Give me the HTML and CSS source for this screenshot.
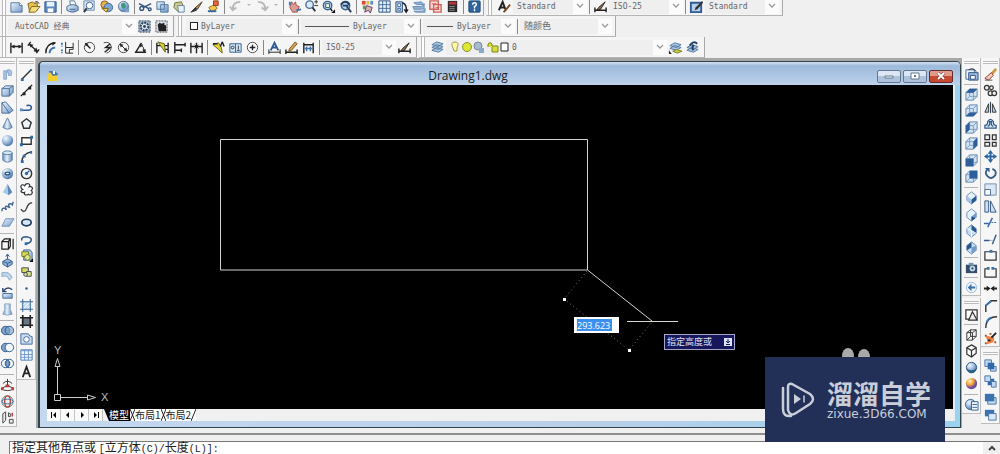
FILE: index.html
```html
<!DOCTYPE html>
<html lang="zh-CN">
<head>
<meta charset="utf-8">
<title>AutoCAD - Drawing1.dwg</title>
<link rel="stylesheet" href="styles.css">
</head>
<body>
<svg class="sprite" aria-hidden="true">
  <defs>
    <linearGradient id="gb" x1="0" y1="0" x2="1" y2="1"><stop offset="0" stop-color="#eef6fd"/><stop offset="1" stop-color="#6f98c6"/></linearGradient>
    <linearGradient id="gh" x1="0" y1="0" x2="1" y2="0"><stop offset="0" stop-color="#6d92bd"/><stop offset=".45" stop-color="#e6f1fb"/><stop offset="1" stop-color="#5d84b2"/></linearGradient>
    <radialGradient id="gs" cx=".35" cy=".3" r=".75"><stop offset="0" stop-color="#f4faff"/><stop offset=".6" stop-color="#8fb0d6"/><stop offset="1" stop-color="#46709f"/></radialGradient>
    <radialGradient id="gm" cx=".35" cy=".3" r=".8"><stop offset="0" stop-color="#fff2c0"/><stop offset=".4" stop-color="#f3a53a"/><stop offset=".7" stop-color="#7d4b9c"/><stop offset="1" stop-color="#3b50a0"/></radialGradient>
  </defs>
  <!-- standard -->
  <symbol id="new" viewBox="0 0 16 16"><path d="M2 4h9l3 3v7H2z" fill="url(#gb)" stroke="#55779e"/><path d="M11 4v3h3" fill="#fff" stroke="#55779e"/></symbol>
  <symbol id="open" viewBox="0 0 16 16"><path d="M2 5l5-2 2 2 3-1v8l-8 2z" fill="#e6c34a" stroke="#80662a"/><path d="M6 8h9l-5 6H3z" fill="#f7de7a" stroke="#80662a"/><path d="M9 4q3-3 5 1" fill="none" stroke="#333"/></symbol>
  <symbol id="save" viewBox="0 0 16 16"><path d="M2 3h12v11H2z" fill="#5b88bd" stroke="#2d5588"/><path d="M4 3h8v5H4z" fill="#e6f1fb"/><path d="M5 10h6v4H5z" fill="#fff"/></symbol>
  <symbol id="print" viewBox="0 0 16 16"><path d="M5 2h5l2 5H6z" fill="#fff" stroke="#55779e"/><path d="M2 8q6-4 12 0v4q-6 4-12 0z" fill="url(#gb)" stroke="#45648b"/><path d="M5 11h6" stroke="#45648b"/></symbol>
  <symbol id="preview" viewBox="0 0 16 16"><path d="M2 2h11v10H2z" fill="#d4e5f5" stroke="#6f8db0"/><circle cx="8" cy="7" r="3.5" fill="#fff" stroke="#45648b"/><path d="M5 10l-3 4" stroke="#333" stroke-width="2"/></symbol>
  <symbol id="publish" viewBox="0 0 16 16"><circle cx="6" cy="6" r="4" fill="#e9b24a" stroke="#8b5b22"/><circle cx="10" cy="9" r="4.5" fill="#7fa6d0" stroke="#3d6595"/><path d="M3 10l5 4 2-4z" fill="#f0cb4e" stroke="#81631b"/></symbol>
  <symbol id="globe" viewBox="0 0 16 16"><circle cx="8" cy="8" r="5.5" fill="url(#gs)" stroke="#69839f"/><path d="M5 5l4-1 2 4-3 3-2-2z" fill="#3d987a"/><path d="M10 11l4-2v5H9z" fill="#77a0cb"/></symbol>
  <symbol id="cut" viewBox="0 0 16 16"><g fill="none" stroke="#35557d" stroke-width="1.5"><path d="M1 5l10 5M14 5L6 9"/><circle cx="4" cy="10" r="2"/><circle cx="12.500" cy="11" r="1.500"/></g></symbol>
  <symbol id="copy" viewBox="0 0 16 16"><path d="M2 3h8v8H2zM6 6h8v8H6z" fill="url(#gb)" stroke="#55779e"/></symbol>
  <symbol id="paste" viewBox="0 0 16 16"><path d="M3 4l7-1 3 7-6 4-5-5z" fill="#cfc98e" stroke="#6c7442"/><path d="M6 7h7v7H7z" fill="#e8f2fb" stroke="#6885a7"/></symbol>
  <symbol id="match" viewBox="0 0 16 16"><path d="M14 3L7 9l2 2z" fill="#c79a58" stroke="#4b3320"/><path d="M7 9l-5 5 6-2z" fill="#333" stroke="#333"/></symbol>
  <symbol id="block" viewBox="0 0 16 16"><path d="M3 9l6-3 3 4-6 4z" fill="#f3c548" stroke="#966e1d"/><path d="M8 2h5v5H8z" fill="#e5673c" stroke="#923b20"/><path d="M2 13h9" stroke="#3566a1" stroke-width="2"/></symbol>
  <symbol id="undo" viewBox="0 0 16 16"><path d="M13 3Q5 3 5 11M2 8l3 4 4-3" fill="none" stroke="#b9b9b9" stroke-width="2"/></symbol>
  <symbol id="redo" viewBox="0 0 16 16"><path d="M3 3q8 0 8 8M7 9l4 3 3-4" fill="none" stroke="#b9b9b9" stroke-width="2"/></symbol>
  <symbol id="pan" viewBox="0 0 16 16"><path d="M4 6l1-3 2 3 2-3 1 4 3 1-2 6H6L3 9z" fill="#dc9c92" stroke="#a1544c"/><path d="M10 12l5-1M3 3v4" stroke="#4675ab" stroke-width="2"/></symbol>
  <symbol id="zoomrt" viewBox="0 0 16 16"><circle cx="6" cy="6" r="4" fill="#d9eafa" stroke="#4a6f9a" stroke-width="1.500"/><path d="M9 9l3 4" stroke="#333" stroke-width="2"/><path d="M11 3h4M13 1v4M11 7h4" stroke="#333"/></symbol>
  <symbol id="zoomwin" viewBox="0 0 16 16"><circle cx="7" cy="7" r="4.500" fill="#b9d5f0" stroke="#3c648f" stroke-width="1.500"/><path d="M5 5h4v4H5z" fill="#fff" stroke="#355"/><path d="M10 10l2 3" stroke="#111" stroke-width="1.500"/><path d="M15 11v4h-4z" fill="#111"/></symbol>
  <symbol id="zoomprev" viewBox="0 0 16 16"><circle cx="8" cy="7" r="4.500" fill="#b9d5f0" stroke="#3c648f" stroke-width="1.500"/><path d="M3 6q5-6 9 0M5 7h5v3M11 10l3 4" fill="none" stroke="#223d62" stroke-width="2"/></symbol>
  <symbol id="props" viewBox="0 0 16 16"><path d="M2 2h4v4H2z" fill="#d84b3d"/><path d="M7 2h3v4H7z" fill="#eab83d"/><path d="M11 2h3v4h-3z" fill="#5b8fce"/><path d="M3 7h3v4H3z" fill="#5b9d54"/><path d="M7 7l6 2-2 6-2-3-4 2z" fill="#d9b2a4" stroke="#5a3d78"/></symbol>
  <symbol id="dc" viewBox="0 0 16 16"><path d="M2 2h12v12H2z" fill="#e3effa" stroke="#2d4f78"/><path d="M6 2v12M10 2v12M2 6h12M2 10h12" stroke="#456e9e"/></symbol>
  <symbol id="palette" viewBox="0 0 16 16"><path d="M2 3h7v11H2z" fill="#b5d0eb" stroke="#2d4f78"/><path d="M4 5h3v3H4zM4 10h3v2H4z" fill="#fff" stroke="#456e9e"/><path d="M9 4q5 2 4 9M11 11l2 3 2-3" fill="none" stroke="#223" stroke-width="1.500"/></symbol>
  <symbol id="sheets" viewBox="0 0 16 16"><path d="M3 4l8-1 3 3H6zM2 8h9l3-3v5l-3 1H3zM3 13h9l3-3v4H5z" fill="#8cb1d4" stroke="#6a8eb4"/></symbol>
  <symbol id="markup" viewBox="0 0 16 16"><path d="M2 2h9v9H2zM6 6h8v8H6z" fill="#f8dedb" stroke="#cf625b" stroke-width="1.500"/><path d="M4 5h5M8 9h4M8 11h4" stroke="#cf625b"/></symbol>
  <symbol id="calc" viewBox="0 0 16 16"><path d="M3 2h10v12H3z" fill="#2b2b2b"/><path d="M4 3h8v3H4z" fill="#b63534"/><path d="M5 8h6M5 10h6M5 12h6" stroke="#ddd" stroke-dasharray="1 1"/></symbol>
  <symbol id="help" viewBox="0 0 16 16"><rect x="2" y="2" width="12" height="12" rx="1" fill="#2f659f" stroke="#1d4472"/><path d="M6 6q0-2 2-2t2 2q0 1-2 2v2M8 11v2" fill="none" stroke="#fff" stroke-width="1.500"/></symbol>
  <!-- styles -->
  <symbol id="tstyle" viewBox="0 0 16 16"><path d="M2 12L6 3l3 8M4 9h4" fill="none" stroke="#222" stroke-width="2"/><path d="M14 6l-5 6-2 2" stroke="#7a4a23" stroke-width="2"/></symbol>
  <symbol id="dstyle" viewBox="0 0 16 16"><path d="M2 9v5M14 9v5M2 12h12" stroke="#222" stroke-width="1.500"/><path d="M13 3L6 9l-2 3 4-1z" fill="#9a6b3a" stroke="#222"/></symbol>
  <symbol id="tbstyle" viewBox="0 0 16 16"><path d="M2 4h11v10H2z" fill="#b7d1ec" stroke="#2e5b92" stroke-width="2"/><path d="M14 2L7 9l-1 3 3-1 6-7z" fill="#333"/></symbol>
  <symbol id="gear" viewBox="0 0 16 16"><path d="M2 2h12v12H2z" fill="#9fb4cb" stroke="#344a63" stroke-dasharray="2 1"/><circle cx="8" cy="8" r="4" fill="#dce7f2" stroke="#2f4155" stroke-width="2" stroke-dasharray="2 1"/><circle cx="8" cy="8" r="1.500" fill="#2f4155"/></symbol>
  <symbol id="wsave" viewBox="0 0 16 16"><path d="M2 2h12v12H2z" fill="#d6dde4" stroke="#555" stroke-dasharray="2 1"/><path d="M4 6l2-2 2 1 3-1v2l2 1v6H5z" fill="#222"/></symbol>
  <!-- dimension -->
  <symbol id="dlin" viewBox="0 0 16 16"><path d="M2 3v11M14 3v11M3 7h10" stroke="#222" stroke-width="1.500"/><path d="M2 7l4-2v4zM14 7l-4-2v4z" fill="#222"/></symbol>
  <symbol id="dali" viewBox="0 0 16 16"><path d="M5 2L2 6M14 10l-3 4M4 5l8 7" stroke="#222" stroke-width="1.500"/><path d="M3 4l5 1-3 3zM13 13l-5-1 3-4z" fill="#222"/></symbol>
  <symbol id="darc" viewBox="0 0 16 16"><path d="M3 14Q3 4 13 3" fill="none" stroke="#222" stroke-width="1.500"/><path d="M7 14q0-5 6-6" fill="none" stroke="#3f75b0" stroke-width="2"/><path d="M14 3l-4-1v4z" fill="#222"/></symbol>
  <symbol id="dord" viewBox="0 0 16 16"><path d="M6 2v6h8M6 8v6h8M10 14v-4h4V3" fill="none" stroke="#222"/><path d="M2 3v4M2 10v4" stroke="#3f75b0" stroke-width="2" stroke-dasharray="2 1"/></symbol>
  <symbol id="drad" viewBox="0 0 16 16"><circle cx="8" cy="8" r="5.500" fill="#f8f8f8" stroke="#444"/><path d="M4 4l5 5" stroke="#222" stroke-width="1.500"/><path d="M3 3l4 1-3 3z" fill="#222"/></symbol>
  <symbol id="djog" viewBox="0 0 16 16"><path d="M5 3q7-2 8 4 0 6-5 7" fill="none" stroke="#444"/><path d="M12 4L7 8h5l-6 5" fill="none" stroke="#222" stroke-width="1.500"/></symbol>
  <symbol id="ddia" viewBox="0 0 16 16"><circle cx="8" cy="8" r="5.500" fill="#f8f8f8" stroke="#444"/><path d="M5 5l6 6" stroke="#222"/><path d="M4 4l4 1-3 3zM12 12l-4-1 3-3z" fill="#222"/></symbol>
  <symbol id="dang" viewBox="0 0 16 16"><path d="M2 13h12M3 13l6-10" stroke="#222" stroke-width="1.500"/><path d="M8 5q4 2 4 7" fill="none" stroke="#222"/><path d="M10 10h4l-2 4zM7 4l4 1-3 3z" fill="#222"/></symbol>
  <symbol id="dquick" viewBox="0 0 16 16"><path d="M2 3v11M14 3v11M2 6h12M9 10h5" stroke="#222" stroke-width="1.500"/><path d="M3 2l7 2 1 9-3-4z" fill="#d5ce32" stroke="#675f1c"/></symbol>
  <symbol id="dbase" viewBox="0 0 16 16"><path d="M3 2v12M14 3v4M10 9v4M3 5h11M3 11h7" stroke="#222" stroke-width="1.500"/></symbol>
  <symbol id="dcont" viewBox="0 0 16 16"><path d="M2 3v11M8 3v11M14 3v11M2 7h12" stroke="#222" stroke-width="1.500"/><path d="M6 5l2 2-2 2M10 5L8 7l2 2" fill="none" stroke="#222"/></symbol>
  <symbol id="dlead" viewBox="0 0 16 16"><path d="M2 5l6-2 3 5 1 6-4-4z" fill="#ddd134" stroke="#6b611c"/><path d="M2 4h5M12 2l2 5M12 2l-2 5" stroke="#222" stroke-width="1.500"/></symbol>
  <symbol id="dtol" viewBox="0 0 16 16"><path d="M2 4h12v9H2zM8 4v9" fill="#d7e7f6" stroke="#345f92"/><circle cx="5" cy="8" r="1.500" fill="none" stroke="#234"/><path d="M11 6v4M9.500 11h3" stroke="#234"/></symbol>
  <symbol id="dcen" viewBox="0 0 16 16"><circle cx="8" cy="8" r="5.500" fill="#fff" stroke="#444"/><path d="M8 5v6M5 8h6" stroke="#222" stroke-width="1.500"/></symbol>
  <symbol id="dedit" viewBox="0 0 16 16"><path d="M4 11l4-8 4 8M5 8h6" fill="none" stroke="#2b5b94" stroke-width="2"/><path d="M2 10v5M14 10v5M2 13h12" stroke="#222"/></symbol>
  <symbol id="dtedit" viewBox="0 0 16 16"><path d="M2 10v5M14 10v5M2 13h12" stroke="#222" stroke-width="1.500"/><path d="M12 2L6 9l-1 3 3-1 6-7z" fill="#d8a144" stroke="#75552a"/></symbol>
  <symbol id="dupd" viewBox="0 0 16 16"><path d="M3 3v11M13 3v11M3 5h10" stroke="#222" stroke-width="1.500"/><path d="M4 9h8M6 7v5M10 7v5" stroke="#3f75b0" stroke-width="1.500"/></symbol>
  <symbol id="layers" viewBox="0 0 16 16"><path d="M2 11l5-3 7 2-5 3zM2 8l5-3 7 2-5 3zM2 5l5-3 7 2-5 3z" fill="#a8c5e3" stroke="#55799f"/></symbol>
  <symbol id="laycur" viewBox="0 0 16 16"><path d="M2 9l5-3 7 2-5 3zM2 6l5-3 7 2-5 3z" fill="#a8c5e3" stroke="#55799f"/><path d="M5 12l4-2 6 2-5 2z" fill="#c7cc38" stroke="#7a8030"/><path d="M1 11v4h3z" fill="#222"/></symbol>
  <symbol id="layprev" viewBox="0 0 16 16"><path d="M2 11l5-3 7 2-5 3zM2 8l5-3 7 2-5 3z" fill="#a8c5e3" stroke="#55799f"/><path d="M5 6q4-6 8-2M9 5q-2 3 0 6" fill="none" stroke="#223d62" stroke-width="2"/></symbol>
  <symbol id="layst" viewBox="0 0 64 16"><path d="M5 9Q2 3 7 3t2 6v3H6z" fill="#fff7a6" stroke="#a29b52"/><circle cx="19" cy="8" r="4.500" fill="#dbe635" stroke="#8b9330"/><circle cx="30" cy="7" r="4" fill="#a9bccd" stroke="#73889b"/><path d="M31 9h5v5h-5z" fill="#88a9cb"/><path d="M40 8V5q2-3 4 0v2h6v6h-6V8" fill="#d6df32" stroke="#7f8628"/><path d="M53 4h7v8h-7z" fill="#fff" stroke="#222"/></symbol>
  <!-- modeling -->
  <symbol id="psolid" viewBox="0 0 16 16"><path d="M4 4h3v9H4zM8 3q6-1 4 6H9V6H8z" fill="#a8c4e2" stroke="#89a9cc"/></symbol>
  <symbol id="box" viewBox="0 0 16 16"><path d="M2 6l4-3h8v7l-4 4H2z" fill="url(#gb)" stroke="#496d98"/><path d="M2 6h8v8M10 6l4-3" fill="none" stroke="#496d98"/></symbol>
  <symbol id="wedge" viewBox="0 0 16 16"><path d="M2 3l4-1 8 9-4 3H2z" fill="url(#gb)" stroke="#496d98"/><path d="M2 3l8 11" stroke="#496d98"/></symbol>
  <symbol id="cone" viewBox="0 0 16 16"><path d="M8 2l5 10q-5 4-10 0z" fill="url(#gh)" stroke="#5d7da3"/></symbol>
  <symbol id="sphere" viewBox="0 0 16 16"><circle cx="8" cy="8" r="6" fill="url(#gs)"/></symbol>
  <symbol id="cyl" viewBox="0 0 16 16"><path d="M3 4v8q5 4 10 0V4z" fill="url(#gh)" stroke="#5d7da3"/><ellipse cx="8" cy="4" rx="5" ry="2" fill="#d8e7f5" stroke="#5d7da3"/></symbol>
  <symbol id="torus" viewBox="0 0 16 16"><circle cx="8" cy="8" r="6" fill="url(#gs)"/><ellipse cx="8" cy="8" rx="2.500" ry="1.500" fill="#e9f2fa" stroke="#2e547f" stroke-width="1.500"/></symbol>
  <symbol id="pyr" viewBox="0 0 16 16"><path d="M8 2l5 9-4 3-6-3z" fill="#a9c9e8"/><path d="M8 2l5 9-4 3z" fill="#5b88b9"/></symbol>
  <symbol id="helix" viewBox="0 0 16 16"><path d="M2 13q0-4 3-3t1 1q-1-4 2-3t2 1q-2-4 1-4t2 2l1-4" fill="none" stroke="#3f6595" stroke-width="1.500"/></symbol>
  <symbol id="psurf" viewBox="0 0 16 16"><path d="M6 4h9l-5 8H2z" fill="url(#gb)" stroke="#7192b8"/></symbol>
  <symbol id="polysolid" viewBox="0 0 16 16"><path d="M2 6h7v8H2zM2 6l3-3h6v8l-2 3M9 6l2-3M14 3v11" fill="none" stroke="#222" stroke-width="1.300"/></symbol>
  <symbol id="presspull" viewBox="0 0 16 16"><path d="M8 2v5M3 9l5-3 5 3v3l-5 3-5-3z" fill="#8baed3" stroke="#395f8c"/><path d="M3 9l5 2 5-2M8 11v4M6 4l2-3 2 3" fill="none" stroke="#395f8c"/></symbol>
  <symbol id="sweep" viewBox="0 0 16 16"><path d="M2 4q8-2 11 5l-3 3Q8 6 2 8z" fill="#bfd5ea" stroke="#8faac7"/></symbol>
  <symbol id="revolve" viewBox="0 0 16 16"><path d="M3 8h10v5H3z" fill="url(#gb)" stroke="#496d98"/><path d="M13 4Q8 0 4 5M3 2v4h4" fill="none" stroke="#2b4a72" stroke-width="1.500"/></symbol>
  <symbol id="loft" viewBox="0 0 16 16"><path d="M5 2h6v6l2 5q-5 2-10 0l2-5z" fill="url(#gh)" stroke="#8ba7c5"/></symbol>
  <symbol id="union" viewBox="0 0 16 16"><g fill="#7fa4cb" stroke="#315d8a"><circle cx="6" cy="8" r="4.500"/><circle cx="10" cy="8" r="4.500" fill-opacity=".6"/></g></symbol>
  <symbol id="subtract" viewBox="0 0 16 16"><g stroke="#315d8a"><circle cx="6" cy="8" r="4.500" fill="#7fa4cb"/><circle cx="10" cy="8" r="4.500" fill="#f4f8fb"/></g></symbol>
  <symbol id="intersect" viewBox="0 0 16 16"><g fill="#f4f8fb" stroke="#315d8a"><circle cx="6" cy="8" r="4.500"/><circle cx="10" cy="8" r="4.500" fill="none"/><path d="M8 4q4 4 0 8-4-4 0-8" fill="#7fa4cb"/></g></symbol>
  <symbol id="move3" viewBox="0 0 16 16"><path d="M8 9V2M8 9l-6 3M8 9l6 3M3 7q5-5 10 0M4 14q4 1 8 0" fill="none" stroke="#333"/><path d="M6 8h4v3H6zM1 11h3v3H1zM12 11h3v3h-3z" fill="#b24139"/></symbol>
  <symbol id="rot3" viewBox="0 0 16 16"><circle cx="8" cy="8" r="6" fill="none" stroke="#4c7863"/><ellipse cx="8" cy="8" rx="3" ry="6" fill="none" stroke="#b5443e" stroke-width="1.500"/><ellipse cx="8" cy="8" rx="6" ry="2.500" fill="none" stroke="#3c6298"/></symbol>
  <symbol id="align3" viewBox="0 0 16 16"><path d="M3 4l3-2v9l-3 3zM9 3q3 0 2 4H9zM10 10h4v4h-4z" fill="#eee" stroke="#444"/><path d="M13 3v4" stroke="#b33" stroke-width="1.500"/></symbol>
  <!-- draw -->
  <symbol id="line" viewBox="0 0 16 16"><path d="M3 13L13 3" stroke="#333" stroke-width="1.500"/><path d="M2 12h3v3H2zM12 2h2v2h-2z" fill="#2f6bab"/></symbol>
  <symbol id="xline" viewBox="0 0 16 16"><path d="M2 14L14 2" stroke="#222" stroke-width="1.500"/><path d="M4 10h3v3H4zM10 4h3v3h-3z" fill="#222"/></symbol>
  <symbol id="pline" viewBox="0 0 16 16"><path d="M2 11h8q4-1 3-4-1-2-5-1" fill="none" stroke="#2b5b94" stroke-width="1.700"/><path d="M1 9h3v3H1z" fill="#5b8ac0"/></symbol>
  <symbol id="polygon" viewBox="0 0 16 16"><path d="M8 3l5 4-2 6H5L3 7z" fill="#eef4fa" stroke="#333" stroke-width="1.500"/></symbol>
  <symbol id="rect" viewBox="0 0 16 16"><path d="M3 5h10v7H3z" fill="#fff" stroke="#333" stroke-width="1.500"/><path d="M1 11h3v3H1zM12 3h3v3h-3z" fill="#2f6bab"/></symbol>
  <symbol id="arc" viewBox="0 0 16 16"><path d="M3 13Q4 5 13 3" fill="none" stroke="#333" stroke-width="1.500"/><path d="M2 12h3v3H2zM4 6h3v3H4zM12 2h2v3h-2z" fill="#2f6bab"/></symbol>
  <symbol id="circle" viewBox="0 0 16 16"><circle cx="8" cy="8" r="5.500" fill="#f1f6fb" stroke="#333" stroke-width="1.500"/><path d="M8 8l3-3" stroke="#2f6bab" stroke-width="1.500"/><circle cx="8" cy="8" r="1.800" fill="#2f6bab"/></symbol>
  <symbol id="cloud" viewBox="0 0 16 16"><path d="M4 8C0 5 3 1 6 4c2-4 7-2 5 1 4-1 4 3 2 4 3 3-1 6-3 4-3 2-5 0-4-2-4 1-5-2-2-3z" fill="#fbfdff" stroke="#333" stroke-width="1.300"/></symbol>
  <symbol id="spline" viewBox="0 0 16 16"><path d="M2 11q4 5 6-1t6-6" fill="none" stroke="#444" stroke-width="1.500"/></symbol>
  <symbol id="ellipse" viewBox="0 0 16 16"><ellipse cx="8" cy="8" rx="5" ry="3.500" fill="#d6e7f7" stroke="#1f3b5d" stroke-width="1.800"/></symbol>
  <symbol id="earc" viewBox="0 0 16 16"><path d="M3 9q-1-4 5-4 6 1 5 4-1 3-5 3" fill="none" stroke="#3c5f8b" stroke-width="1.700"/><path d="M6 11h3v3H6z" fill="#2f6bab"/></symbol>
  <symbol id="insert" viewBox="0 0 16 16"><path d="M5 2h7l2 3v8H5z" fill="#a9c5e3" stroke="#456a97"/><path d="M3 4h7v5H3z" fill="#d5dc5c" stroke="#6c752a"/><circle cx="9" cy="10" r="3" fill="#dfe785" stroke="#6c752a"/><path d="M15 11v4h-4z" fill="#111"/></symbol>
  <symbol id="mkblock" viewBox="0 0 16 16"><path d="M3 3h7v5H3z" fill="#d5dc5c" stroke="#445"/><path d="M8 7h5v5H8z" fill="#dfe785" stroke="#445"/><circle cx="7" cy="10" r="2" fill="#cfe0a0" stroke="#445"/></symbol>
  <symbol id="point" viewBox="0 0 16 16"><circle cx="8" cy="8" r="1.300" fill="#2b5b94"/></symbol>
  <symbol id="hatch" viewBox="0 0 16 16"><path d="M3 4h10v9H3z" fill="#c6dcf1"/><path d="M4 1v14M12 1v14M1 4h14M1 12h14" stroke="#345f92"/><path d="M5 11l6-6M5 7l2-2M9 11l2-2" stroke="#fff"/></symbol>
  <symbol id="grad" viewBox="0 0 16 16"><path d="M3 4h10v9H3z" fill="#687684"/><path d="M4 1v14M12 1v14M1 4h14M1 12h14" stroke="#222" stroke-width="1.700"/></symbol>
  <symbol id="region" viewBox="0 0 16 16"><path d="M2 3h8q1 3 4 3v8H2z" fill="#c9ddf1" stroke="#41689a"/><circle cx="8" cy="9" r="3" fill="#fff" stroke="#41689a"/></symbol>
  <symbol id="table" viewBox="0 0 16 16"><path d="M2 3h12v11H2z" fill="#f1f7fd" stroke="#4878b4"/><path d="M2 4h12M2 8h12M2 11h12M6 3v11M10 3v11" stroke="#6d97c8"/></symbol>
  <symbol id="mtext" viewBox="0 0 16 16"><path d="M4 14L8 3l4 11M5.500 10h5" fill="none" stroke="#222" stroke-width="1.900"/></symbol>
  <!-- view -->
  <symbol id="vnamed" viewBox="0 0 16 16"><path d="M2 3h9v10H2z" fill="#eaf3fb" stroke="#456a97"/><path d="M5 6h10v8H5z" fill="#98bade" stroke="#2f5380"/><path d="M7 9h5v4H7z" fill="#fff" stroke="#2f5380"/><path d="M5 3q5-3 8 2" fill="none" stroke="#223"/></symbol>
  <symbol id="cubebase" viewBox="0 0 16 16"><path d="M2 6l4-4h8v8l-4 4H2z" fill="#d3e4f4" stroke="#5f85b0"/><path d="M2 6h8v8M10 6l4-4M6 2v8l-4 4M6 10h8" fill="none" stroke="#7a9bc0"/></symbol>
  <symbol id="vtop" viewBox="0 0 16 16"><use href="#cubebase"/><path d="M2 6l4-4h8l-4 4z" fill="#2e5f9a"/></symbol>
  <symbol id="vbot" viewBox="0 0 16 16"><use href="#cubebase"/><path d="M2 14l4-4h8l-4 4z" fill="#2e5f9a"/></symbol>
  <symbol id="vleft" viewBox="0 0 16 16"><use href="#cubebase"/><path d="M2 6l4-4v8l-4 4z" fill="#2e5f9a"/></symbol>
  <symbol id="vright" viewBox="0 0 16 16"><use href="#cubebase"/><path d="M10 6l4-4v8l-4 4z" fill="#2e5f9a"/></symbol>
  <symbol id="vfront" viewBox="0 0 16 16"><use href="#cubebase"/><path d="M2 6h8v8H2z" fill="#2e5f9a"/></symbol>
  <symbol id="vback" viewBox="0 0 16 16"><use href="#cubebase"/><path d="M6 2h8v8H6z" fill="#2e5f9a"/></symbol>
  <symbol id="iso1" viewBox="0 0 16 16"><path d="M8 2l5 4v5l-5 4-5-4V6z" fill="#e4f0fa" stroke="#6b8fb8"/><path d="M3 6l5 4v5l-5-4z" fill="#a5c4e4"/><path d="M13 6l-5 4v5l5-4z" fill="#29588f"/></symbol>
  <symbol id="iso2" viewBox="0 0 16 16"><path d="M8 2l5 4v5l-5 4-5-4V6z" fill="#e4f0fa" stroke="#6b8fb8"/><path d="M13 6l-5 4v5l5-4z" fill="#6f9ccb"/><path d="M8 10v5l4-3z" fill="#204a7c"/></symbol>
  <symbol id="iso3" viewBox="0 0 16 16"><path d="M8 2l5 4v5l-5 4-5-4V6z" fill="#c6dcf1" stroke="#6b8fb8"/><path d="M8 2l5 4v5L8 8z" fill="#29588f"/><path d="M3 6l5 2v7M8 8l5 3" fill="none" stroke="#f7fbff"/></symbol>
  <symbol id="iso4" viewBox="0 0 16 16"><path d="M8 2l5 4v5l-5 4-5-4V6z" fill="#c6dcf1" stroke="#6b8fb8"/><path d="M8 2L3 6v5l5-3z" fill="#29588f"/><path d="M13 6L8 8v7l5-4z" fill="#6f9ccb"/></symbol>
  <symbol id="camera" viewBox="0 0 16 16"><path d="M2 5h12v9H2z" fill="#354d69"/><path d="M5 3h5v3H5z" fill="#7892ad"/><circle cx="9" cy="9" r="3" fill="#c7dbef"/><circle cx="9" cy="9" r="1.200" fill="#354d69"/></symbol>
  <symbol id="vprev" viewBox="0 0 16 16"><circle cx="8" cy="8" r="5.500" fill="#eef5fb" stroke="#9cb8d5"/><path d="M4 8l4-4v3h4v2H8v3z" fill="#3e74ad"/></symbol>
  <symbol id="vs2d" viewBox="0 0 16 16"><path d="M2 3h12v10H2z" fill="#fff" stroke="#333" stroke-width="1.300"/><path d="M9 5l5 9H5z" fill="#eee" stroke="#333" stroke-width="1.300"/></symbol>
  <symbol id="vs3w" viewBox="0 0 16 16"><path d="M3 6l4-3h6v7l-4 4H3zM3 6h6v8M9 6l4-3M7 3v7l-4 4M7 10h6" fill="none" stroke="#333"/></symbol>
  <symbol id="vs3h" viewBox="0 0 16 16"><path d="M8 2l5 3v6l-5 4-5-3V5zM3 5l5 3 5-3M8 8v7" fill="#fff" stroke="#333" stroke-width="1.300"/></symbol>
  <symbol id="vsreal" viewBox="0 0 16 16"><circle cx="8" cy="8" r="5.500" fill="url(#gs)" stroke="#2d5a86"/><path d="M3 9q5 4 10 0-1 5-5 5t-5-5" fill="#2b6088"/></symbol>
  <symbol id="vscon" viewBox="0 0 16 16"><circle cx="8" cy="8" r="6" fill="url(#gm)"/></symbol>
  <symbol id="vsman" viewBox="0 0 16 16"><circle cx="7" cy="8" r="5.500" fill="url(#gs)" stroke="#406a97"/><path d="M8 5h7v9H8z" fill="#f3f8fd" stroke="#345f92"/><path d="M9 8h5M9 11h5" stroke="#345f92"/></symbol>
  <!-- modify -->
  <symbol id="erase" viewBox="0 0 16 16"><path d="M14 2L8 9" stroke="#c79a3f" stroke-width="3"/><path d="M9 6l2 3-5 5-4-2z" fill="#f3cdbb" stroke="#963b32"/><path d="M2 14h8" stroke="#555"/></symbol>
  <symbol id="mcopy" viewBox="0 0 16 16"><g fill="#eee" stroke="#333" stroke-width="1.300"><circle cx="4" cy="5" r="2.500"/><circle cx="9" cy="5" r="2"/><circle cx="8" cy="11" r="2.500"/><circle cx="12" cy="11" r="2.500"/></g></symbol>
  <symbol id="mirror" viewBox="0 0 16 16"><path d="M6 4v9H2zM10 4v9h4z" fill="#b8cfe7" stroke="#333"/><path d="M8 2v12" stroke="#234"/></symbol>
  <symbol id="offset" viewBox="0 0 16 16"><path d="M2 13v-3q3 0 3-4 3-5 6 0 0 4 3 4v3zM5 11q3-1 2-5h2q-1 4 2 5" fill="#dcebf8" stroke="#2f5888" stroke-width="1.300"/></symbol>
  <symbol id="array" viewBox="0 0 16 16"><path d="M2 2h5v5H2zM10 2h4v5h-4zM2 10h5v4H2zM10 10h4v4h-4z" fill="#eee" stroke="#333" stroke-width="1.300"/></symbol>
  <symbol id="move" viewBox="0 0 16 16"><path d="M8 3v10M3 8h10" stroke="#2e67a5" stroke-width="2"/><path d="M8 1l3 4H5zM8 15l3-4H5zM1 8l4-3v6zM15 8l-4-3v6z" fill="#2e67a5"/></symbol>
  <symbol id="rotate" viewBox="0 0 16 16"><path d="M5 3q-4 4 0 8 4 4 8-1 2-5-3-7" fill="none" stroke="#395f8c" stroke-width="2"/><path d="M2 2h5v5z" fill="#395f8c"/></symbol>
  <symbol id="scale" viewBox="0 0 16 16"><path d="M2 2h12v12H2z" fill="#dce9f5" stroke="#6d8eaf"/><path d="M2 8h6v6H2z" fill="#fff" stroke="#4f7095"/></symbol>
  <symbol id="stretch" viewBox="0 0 16 16"><path d="M2 2h4v12H2zM8 2l6 12H8z" fill="#cfe1f3" stroke="#34577f"/></symbol>
  <symbol id="trim" viewBox="0 0 16 16"><path d="M1 9h5M5 13l5-10" stroke="#3268a3" stroke-width="1.500"/><path d="M9 8h6" stroke="#3268a3" stroke-dasharray="2 1"/></symbol>
  <symbol id="extend" viewBox="0 0 16 16"><path d="M1 9h6M10 13l4-10" stroke="#345c8c" stroke-width="1.500"/><path d="M7 9h4" stroke="#777" stroke-dasharray="1 1"/></symbol>
  <symbol id="brkpt" viewBox="0 0 16 16"><path d="M2 4h12v9H2z" fill="#f7f7f7" stroke="#333" stroke-width="1.300"/><path d="M7 2h3v3H7z" fill="#3d73af"/></symbol>
  <symbol id="brk" viewBox="0 0 16 16"><path d="M5 4H2v9h12V4h-3" fill="none" stroke="#333" stroke-width="1.300"/><path d="M4 2h3v3H4zM9 2h3v3H9z" fill="#3d73af"/></symbol>
  <symbol id="join" viewBox="0 0 16 16"><path d="M1 8h5M10 8h5" stroke="#222" stroke-width="2"/><path d="M4 5l4 3-4 3zM12 5L8 8l4 3z" fill="#222"/></symbol>
  <symbol id="chamfer" viewBox="0 0 16 16"><path d="M3 15V8l6-5h6" fill="none" stroke="#333" stroke-width="1.500"/><path d="M3 8l6-5" stroke="#3d73af" stroke-width="2"/></symbol>
  <symbol id="fillet" viewBox="0 0 16 16"><path d="M3 15q0-12 12-12" fill="none" stroke="#333" stroke-width="1.500"/><path d="M4 9q1-4 5-5" fill="none" stroke="#3d73af" stroke-width="2"/></symbol>
  <symbol id="explode" viewBox="0 0 16 16"><path d="M5 5l3 1 3-1 1 3-1 4-3 1-4 1 1-4-2-3z" fill="#ed8242"/><path d="M2 4h2v2H2zM7 2h2v2H7zM2 12h2v2H2zM12 11h2v2h-2z" fill="#b1502d"/><path d="M9 7l5-5M5 10h3" stroke="#222" stroke-width="2"/></symbol>
  <symbol id="ofront" viewBox="0 0 16 16"><path d="M2 2h7v7H2zM8 9h6v5H8z" fill="#c1d8ee" stroke="#4b76a5"/><path d="M5 5h7v7H5z" fill="#2f6baa"/></symbol>
  <symbol id="oback" viewBox="0 0 16 16"><path d="M5 5h7v7H5z" fill="#2f6baa"/><path d="M2 2h6v6H2zM9 8h5v6H9z" fill="#c1d8ee" stroke="#4b76a5"/></symbol>
  <symbol id="oabove" viewBox="0 0 16 16"><path d="M5 7h9v7H5z" fill="#c1d8ee" stroke="#4b76a5"/><path d="M2 3h10v8H2z" fill="#3b73ae"/></symbol>
  <symbol id="ounder" viewBox="0 0 16 16"><path d="M2 3h10v7H2z" fill="#3b73ae"/><path d="M6 7h8v7H6z" fill="#dbe9f6" stroke="#4b76a5"/></symbol>
  <symbol id="chev" viewBox="0 0 8 6"><path d="M1 1l3 3 3-3" fill="none" stroke="#999" stroke-width="1.300"/></symbol>
</svg>

<header class="bars">
  <div class="row row-top">
    <div class="bar lead">
      <button class="i" aria-label="新建"><svg><use href="#new"/></svg></button><button class="i" aria-label="打开"><svg><use href="#open"/></svg></button><button class="i" aria-label="保存"><svg><use href="#save"/></svg></button><span class="sep"></span>
      <button class="i" aria-label="打印"><svg><use href="#print"/></svg></button><button class="i" aria-label="打印预览"><svg><use href="#preview"/></svg></button><button class="i" aria-label="发布"><svg><use href="#publish"/></svg></button><button class="i" aria-label="三维 DWF"><svg><use href="#globe"/></svg></button><span class="sep"></span>
      <button class="i" aria-label="剪切"><svg><use href="#cut"/></svg></button><button class="i" aria-label="复制"><svg><use href="#copy"/></svg></button><button class="i" aria-label="粘贴"><svg><use href="#paste"/></svg></button><button class="i" aria-label="特性匹配"><svg><use href="#match"/></svg></button><button class="i" aria-label="块编辑器"><svg><use href="#block"/></svg></button><span class="sep"></span>
      <button class="i" aria-label="放弃"><svg><use href="#undo"/></svg></button><button class="drop" aria-label="放弃列表"></button><button class="i" aria-label="重做"><svg><use href="#redo"/></svg></button><button class="drop" aria-label="重做列表"></button><span class="sep"></span>
      <button class="i" aria-label="平移"><svg><use href="#pan"/></svg></button><button class="i" aria-label="实时缩放"><svg><use href="#zoomrt"/></svg></button><button class="i" aria-label="窗口缩放"><svg><use href="#zoomwin"/></svg></button><button class="i" aria-label="缩放上一个"><svg><use href="#zoomprev"/></svg></button><span class="sep"></span>
      <button class="i" aria-label="特性"><svg><use href="#props"/></svg></button><button class="i" aria-label="设计中心"><svg><use href="#dc"/></svg></button><button class="i" aria-label="工具选项板"><svg><use href="#palette"/></svg></button><button class="i" aria-label="图纸集"><svg><use href="#sheets"/></svg></button><button class="i" aria-label="标记集"><svg><use href="#markup"/></svg></button><button class="i" aria-label="计算器"><svg><use href="#calc"/></svg></button><span class="sep"></span>
      <button class="i" aria-label="帮助"><svg><use href="#help"/></svg></button>
    </div>
    <div class="bar">
      <button class="i" aria-label="文字样式"><svg><use href="#tstyle"/></svg></button>
      <div class="combo c-s"><select aria-label="文字样式列表"><option>Standard</option></select><svg class="chev"><use href="#chev"/></svg></div><span class="sep"></span>
      <button class="i" aria-label="标注样式"><svg><use href="#dstyle"/></svg></button>
      <div class="combo c-s"><select aria-label="标注样式列表"><option>ISO-25</option></select><svg class="chev"><use href="#chev"/></svg></div><span class="sep"></span>
      <button class="i" aria-label="表格样式"><svg><use href="#tbstyle"/></svg></button>
      <div class="combo c-s"><select aria-label="表格样式列表"><option>Standard</option></select><svg class="chev"><use href="#chev"/></svg></div>
    </div>
  </div>
  <div class="row">
    <div class="bar lead">
      <div class="combo c-l"><select aria-label="工作空间"><option>AutoCAD 经典</option></select><svg class="chev"><use href="#chev"/></svg></div>
      <button class="i" aria-label="工作空间设置"><svg><use href="#gear"/></svg></button><button class="i" aria-label="我的工作空间"><svg><use href="#wsave"/></svg></button>
    </div>
    <div class="bar">
      <div class="combo c-m"><span class="swatch"></span><select aria-label="颜色"><option>ByLayer</option></select><svg class="chev"><use href="#chev"/></svg></div><span class="sep"></span>
      <div class="combo c-w"><span class="rule"></span><select aria-label="线型"><option>ByLayer</option></select><svg class="chev"><use href="#chev"/></svg></div><span class="sep"></span>
      <div class="combo c-n"><span class="rule short"></span><select aria-label="线宽"><option>ByLayer</option></select><svg class="chev"><use href="#chev"/></svg></div><span class="sep"></span>
      <div class="combo c-n zh"><select aria-label="打印样式"><option>随颜色</option></select><svg class="chev"><use href="#chev"/></svg></div>
    </div>
  </div>
  <div class="row">
    <div class="bar lead">
      <button class="i" aria-label="线性"><svg><use href="#dlin"/></svg></button><button class="i" aria-label="对齐"><svg><use href="#dali"/></svg></button><button class="i" aria-label="弧长"><svg><use href="#darc"/></svg></button><button class="i" aria-label="坐标"><svg><use href="#dord"/></svg></button><span class="sep"></span>
      <button class="i" aria-label="半径"><svg><use href="#drad"/></svg></button><button class="i" aria-label="折弯"><svg><use href="#djog"/></svg></button><button class="i" aria-label="直径"><svg><use href="#ddia"/></svg></button><button class="i" aria-label="角度"><svg><use href="#dang"/></svg></button><span class="sep"></span>
      <button class="i" aria-label="快速标注"><svg><use href="#dquick"/></svg></button><button class="i" aria-label="基线"><svg><use href="#dbase"/></svg></button><button class="i" aria-label="连续"><svg><use href="#dcont"/></svg></button><span class="sep"></span>
      <button class="i" aria-label="快速引线"><svg><use href="#dlead"/></svg></button><button class="i" aria-label="公差"><svg><use href="#dtol"/></svg></button><button class="i" aria-label="圆心标记"><svg><use href="#dcen"/></svg></button><span class="sep"></span>
      <button class="i" aria-label="编辑标注"><svg><use href="#dedit"/></svg></button><button class="i" aria-label="编辑标注文字"><svg><use href="#dtedit"/></svg></button><button class="i" aria-label="标注更新"><svg><use href="#dupd"/></svg></button><span class="sep"></span>
      <div class="combo c-s"><select aria-label="当前标注样式"><option>ISO-25</option></select><svg class="chev"><use href="#chev"/></svg></div>
      <button class="i" aria-label="标注样式管理"><svg><use href="#dstyle"/></svg></button>
    </div>
    <div class="bar">
      <button class="i" aria-label="图层特性"><svg><use href="#layers"/></svg></button>
      <div class="combo c-x"><svg class="layst"><use href="#layst"/></svg><select aria-label="图层"><option>0</option></select><svg class="chev"><use href="#chev"/></svg></div>
      <button class="i" aria-label="置为当前"><svg><use href="#laycur"/></svg></button><button class="i" aria-label="上一个图层"><svg><use href="#layprev"/></svg></button>
    </div>
  </div>
</header>

<main class="work">
  <div class="side">
    <div class="col first">
      <span class="grip"></span>
      <button class="i" aria-label="多段体"><svg><use href="#psolid"/></svg></button><button class="i" aria-label="长方体"><svg><use href="#box"/></svg></button><button class="i" aria-label="楔体"><svg><use href="#wedge"/></svg></button><button class="i" aria-label="圆锥体"><svg><use href="#cone"/></svg></button><button class="i" aria-label="球体"><svg><use href="#sphere"/></svg></button><button class="i" aria-label="圆柱体"><svg><use href="#cyl"/></svg></button><button class="i" aria-label="圆环体"><svg><use href="#torus"/></svg></button><button class="i" aria-label="棱锥体"><svg><use href="#pyr"/></svg></button><button class="i" aria-label="螺旋"><svg><use href="#helix"/></svg></button><button class="i" aria-label="平面曲面"><svg><use href="#psurf"/></svg></button><span class="sep"></span>
      <button class="i" aria-label="拉伸"><svg><use href="#polysolid"/></svg></button><button class="i" aria-label="按住并拖动"><svg><use href="#presspull"/></svg></button><button class="i" aria-label="扫掠"><svg><use href="#sweep"/></svg></button><button class="i" aria-label="旋转"><svg><use href="#revolve"/></svg></button><button class="i" aria-label="放样"><svg><use href="#loft"/></svg></button><span class="sep"></span>
      <button class="i" aria-label="并集"><svg><use href="#union"/></svg></button><button class="i" aria-label="差集"><svg><use href="#subtract"/></svg></button><button class="i" aria-label="交集"><svg><use href="#intersect"/></svg></button><span class="sep"></span>
      <button class="i" aria-label="三维移动"><svg><use href="#move3"/></svg></button><button class="i" aria-label="三维旋转"><svg><use href="#rot3"/></svg></button><button class="i" aria-label="三维对齐"><svg><use href="#align3"/></svg></button>
    </div>
    <div class="col">
      <span class="grip"></span>
      <button class="i" aria-label="直线"><svg><use href="#line"/></svg></button><button class="i" aria-label="构造线"><svg><use href="#xline"/></svg></button><button class="i" aria-label="多段线"><svg><use href="#pline"/></svg></button><button class="i" aria-label="正多边形"><svg><use href="#polygon"/></svg></button><button class="i" aria-label="矩形"><svg><use href="#rect"/></svg></button><button class="i" aria-label="圆弧"><svg><use href="#arc"/></svg></button><button class="i" aria-label="圆"><svg><use href="#circle"/></svg></button><button class="i" aria-label="修订云线"><svg><use href="#cloud"/></svg></button><button class="i" aria-label="样条曲线"><svg><use href="#spline"/></svg></button><button class="i" aria-label="椭圆"><svg><use href="#ellipse"/></svg></button><button class="i" aria-label="椭圆弧"><svg><use href="#earc"/></svg></button><button class="i" aria-label="插入块"><svg><use href="#insert"/></svg></button><button class="i" aria-label="创建块"><svg><use href="#mkblock"/></svg></button><button class="i" aria-label="点"><svg><use href="#point"/></svg></button><button class="i" aria-label="图案填充"><svg><use href="#hatch"/></svg></button><button class="i" aria-label="渐变色"><svg><use href="#grad"/></svg></button><button class="i" aria-label="面域"><svg><use href="#region"/></svg></button><button class="i" aria-label="表格"><svg><use href="#table"/></svg></button><button class="i" aria-label="多行文字"><svg><use href="#mtext"/></svg></button>
    </div>
  </div>

  <section class="mdi">
    <div class="win">
      <div class="title">
        <svg class="dwg" viewBox="0 0 12 12" aria-hidden="true"><path d="M2 1h6l3 3v4H2z" fill="#477bb7"/><path d="M0 6l3-4 3 4 5-1v6H1z" fill="#f3cf2e"/><path d="M6 1h2v3H6z" fill="#fff"/></svg>
        <h1>Drawing1.dwg</h1>
        <div class="wbtns">
          <button class="wb" aria-label="最小化"><svg viewBox="0 0 10 8"><path d="M1 4h8v2H1z" fill="#fff" stroke="#66788c"/></svg></button>
          <button class="wb" aria-label="最大化"><svg viewBox="0 0 10 8"><path d="M1 1h8v6H1z" fill="#fff" stroke="#66788c"/><path d="M4 3h2v2H4z" fill="#66788c"/></svg></button>
          <button class="wb close" aria-label="关闭"><svg viewBox="0 0 10 8"><path d="M2 1l6 6M8 1L2 7" stroke="#6c2f2b" stroke-width="3"/><path d="M2 1l6 6M8 1L2 7" stroke="#fff" stroke-width="2"/></svg></button>
        </div>
      </div>
      <div class="canvas">
        <svg class="drawing" aria-hidden="true">
          <path d="M173.500 54.500h367v130.500h-367zM540.500 185L605 236" fill="none" stroke="#d2d2d2"/>
          <path d="M580 236.500h51" stroke="#d8d8d0"/>
          <path d="M540 186L517 214L582 265L605 237" fill="none" stroke="#777" stroke-dasharray="1 3"/>
          <path d="M516 213h3v3h-3zM581 264h3v3h-3z" fill="#fff"/>
          <ellipse cx="801" cy="271" rx="6" ry="8" fill="#aaa"/><ellipse cx="817" cy="272" rx="6" ry="8" fill="#aaa"/>
        </svg>
        <svg class="ucs" viewBox="0 0 60 60" role="img" aria-label="UCS"><g fill="none" stroke="#ccc"><path d="M7.500 48.500h6v6h-6zM10.500 48V20M14 51.500h27M8 20.500l2.500-8 2.500 8zM40.500 49l8 2.500-8 2.500z"/></g><text x="7" y="8">Y</text><text x="54" y="55">X</text></svg>
        <input class="dyn" aria-label="高度" value="293.623">
        <div class="tip"><span>指定高度或</span><svg viewBox="0 0 8 8" aria-hidden="true"><path d="M0 0h8v8H0z" fill="#dce3f5"/><path d="M4 1v4M2 3l2 2 2-2M2 6.500h4" fill="none" stroke="#16165c"/></svg></div>
      </div>
      <nav class="tabs">
        <button class="nb" aria-label="第一个"><svg viewBox="0 0 8 8"><path d="M1 1h1v6H1zM6 1v6L3 4z"/></svg></button><button class="nb" aria-label="上一个"><svg viewBox="0 0 8 8"><path d="M5 1v6L2 4z"/></svg></button><button class="nb" aria-label="下一个"><svg viewBox="0 0 8 8"><path d="M3 1v6l3-3z"/></svg></button><button class="nb" aria-label="最后一个"><svg viewBox="0 0 8 8"><path d="M2 1v6l3-3zM6 1h1v6H6z"/></svg></button>
        <button class="tab on">模型</button>
        <svg class="slash" viewBox="0 0 5 12"><path d="M0 0l5 12M5 0L0 12" stroke="#222"/></svg>
        <button class="tab">布局1</button>
        <svg class="slash" viewBox="0 0 5 12"><path d="M0 0l5 12M5 0L0 12" stroke="#222"/></svg>
        <button class="tab">布局2</button>
        <svg class="slash" viewBox="0 0 5 12"><path d="M5 0L0 12" stroke="#222"/></svg>
      </nav>
    </div>
  </section>

  <div class="side right">
    <div class="stack">
      <div class="col">
        <span class="grip"></span>
        <button class="i" aria-label="命名视图"><svg><use href="#vnamed"/></svg></button><span class="sep"></span>
        <button class="i" aria-label="俯视"><svg><use href="#vtop"/></svg></button><button class="i" aria-label="仰视"><svg><use href="#vbot"/></svg></button><button class="i" aria-label="左视"><svg><use href="#vleft"/></svg></button><button class="i" aria-label="右视"><svg><use href="#vright"/></svg></button><button class="i" aria-label="前视"><svg><use href="#vfront"/></svg></button><button class="i" aria-label="后视"><svg><use href="#vback"/></svg></button><span class="sep"></span>
        <button class="i" aria-label="西南等轴测"><svg><use href="#iso1"/></svg></button><button class="i" aria-label="东南等轴测"><svg><use href="#iso2"/></svg></button><button class="i" aria-label="东北等轴测"><svg><use href="#iso3"/></svg></button><button class="i" aria-label="西北等轴测"><svg><use href="#iso4"/></svg></button><span class="sep"></span>
        <button class="i" aria-label="相机"><svg><use href="#camera"/></svg></button><span class="sep"></span>
        <button class="i" aria-label="上一个视图"><svg><use href="#vprev"/></svg></button>
      </div>
      <div class="col">
        <span class="grip"></span>
        <button class="i" aria-label="二维线框"><svg><use href="#vs2d"/></svg></button><span class="sep"></span>
        <button class="i" aria-label="三维线框"><svg><use href="#vs3w"/></svg></button><button class="i" aria-label="三维隐藏"><svg><use href="#vs3h"/></svg></button><button class="i" aria-label="真实"><svg><use href="#vsreal"/></svg></button><button class="i" aria-label="概念"><svg><use href="#vscon"/></svg></button><span class="sep"></span>
        <button class="i" aria-label="视觉样式管理"><svg><use href="#vsman"/></svg></button>
      </div>
    </div>
    <div class="stack">
      <div class="col">
        <span class="grip"></span>
        <button class="i" aria-label="删除"><svg><use href="#erase"/></svg></button><button class="i" aria-label="复制对象"><svg><use href="#mcopy"/></svg></button><button class="i" aria-label="镜像"><svg><use href="#mirror"/></svg></button><button class="i" aria-label="偏移"><svg><use href="#offset"/></svg></button><button class="i" aria-label="阵列"><svg><use href="#array"/></svg></button><button class="i" aria-label="移动"><svg><use href="#move"/></svg></button><button class="i" aria-label="旋转对象"><svg><use href="#rotate"/></svg></button><button class="i" aria-label="缩放"><svg><use href="#scale"/></svg></button><button class="i" aria-label="拉伸对象"><svg><use href="#stretch"/></svg></button><button class="i" aria-label="修剪"><svg><use href="#trim"/></svg></button><button class="i" aria-label="延伸"><svg><use href="#extend"/></svg></button><button class="i" aria-label="打断于点"><svg><use href="#brkpt"/></svg></button><button class="i" aria-label="打断"><svg><use href="#brk"/></svg></button><button class="i" aria-label="合并"><svg><use href="#join"/></svg></button><button class="i" aria-label="倒角"><svg><use href="#chamfer"/></svg></button><button class="i" aria-label="圆角"><svg><use href="#fillet"/></svg></button><button class="i" aria-label="分解"><svg><use href="#explode"/></svg></button>
      </div>
      <div class="col">
        <span class="grip"></span>
        <button class="i" aria-label="前置"><svg><use href="#ofront"/></svg></button><button class="i" aria-label="后置"><svg><use href="#oback"/></svg></button><button class="i" aria-label="置于对象之上"><svg><use href="#oabove"/></svg></button><button class="i" aria-label="置于对象之下"><svg><use href="#ounder"/></svg></button>
      </div>
    </div>
  </div>
</main>

<footer class="cmd">
  <div class="cmdline">
    <p>指定其他角点或 <span>[</span>立方体<span>(C)/</span>长度<span>(L)]:</span></p>
    <button class="up" aria-label="向上滚动"><svg viewBox="0 0 8 6"><path d="M1 5l3-3 3 3" fill="none" stroke="#444" stroke-width="2"/></svg></button>
  </div>
</footer>

<aside class="brand">
  <svg viewBox="0 0 36 38" aria-hidden="true"><g fill="none" stroke="#c9ced9" stroke-linecap="round" stroke-linejoin="round"><path d="M8 29V6Q8 2 12 3l18 10q6 5 0 10L16 32Q10 36 8 29" stroke-width="2.500"/><path d="M3 7v21q0 8 8 7" stroke-width="2.500"/><path d="M24 15v6" stroke-width="1.500"/></g><path d="M14 13l7 5-7 5z" fill="#c9ced9"/></svg>
  <div><strong>溜溜自学</strong><span>zixue.3D66.COM</span></div>
</aside>
</body>
</html>
```
FILE: styles.css
```css
* { box-sizing: border-box; }

body {
  margin: 0;
  min-height: 100vh;
  display: flex;
  flex-direction: column;
  position: relative;
  overflow: hidden;
  background: #f0f0f0;
  color: #222;
  font-family: "Liberation Sans", "Noto Sans CJK SC", sans-serif;
}

button, input, select { font: inherit; color: inherit; }
button { padding: 0; border: 0; background: none; }
.sprite { position: absolute; width: 0; height: 0; }

/* toolbars */
.bars { margin-top: -3px; }
.row { display: flex; height: 21px; gap: 2px; }
.row-top { height: 19px; }
.bar {
  display: flex;
  align-items: center;
  padding: 0 3px 0 10px;
  border-right: 1px solid #a8a8a8;
  border-bottom: 1px solid #b4b4b4;
  background: linear-gradient(90deg, #f5f5f5 2px, #b9b9b9 2px, #b9b9b9 3px, #fff 3px, #fff 5px, #b9b9b9 5px, #b9b9b9 6px, #f5f5f5 6px);
}
.bar.lead { padding: 0 3px 0 8px; }
.row-top .bar.lead { padding-right: 0; }
.i { flex: none; display: flex; justify-content: center; align-items: center; width: 17px; height: 16px; }
.i svg { flex: none; width: 15px; height: 15px; }
.bar .sep { flex: none; width: 1px; height: 15px; margin: 0 2px; background: #888; }
.drop { width: 10px; height: 16px; display: flex; align-items: center; justify-content: center; }
.drop::after { content: ""; border: 2px solid transparent; border-top-color: #b5b5b5; }

.combo {
  display: flex;
  align-items: center;
  height: 15px;
  padding-left: 4px;
  background: linear-gradient(270deg, #fbfbfb 14px, #efefef 14px);
  color: #666;
  font: 8px/15px "DejaVu Sans Mono", "Noto Sans CJK SC", monospace;
}
.combo select {
  flex: 1;
  min-width: 0;
  height: 15px;
  padding: 0;
  border: 0;
  appearance: none;
  background: none;
}
.chev { flex: none; width: 8px; height: 6px; margin-right: 3px; }
.c-s { width: 74px; }
.c-l { width: 128px; padding-left: 7px; }
.c-m { width: 110px; }
.c-w { width: 117px; }
.c-n { width: 92px; }
.c-x { width: 221px; }
.zh { font-size: 9px; }
.layst { flex: none; width: 64px; height: 16px; margin-left: -2px; }
.swatch { flex: none; width: 8px; height: 8px; margin-right: 3px; border: 1px solid #222; background: #fff; }
.rule { flex: none; width: 44px; height: 1px; margin-right: 4px; background: #555; }
.rule.short { width: 26px; }

/* docked side toolbars */
.work { flex: 1; display: flex; min-height: 0; }
.side { flex: none; display: flex; align-items: flex-start; }
.side .col {
  width: 19px;
  display: flex;
  flex-direction: column;
  align-items: center;
  border-right: 1px solid #bdbdbd;
  border-bottom: 1px solid #bdbdbd;
  background: #f6f6f6;
}
.side .col.first { width: 17px; padding-right: 2px; }
.col .grip { width: 15px; height: 8px; background: linear-gradient(#f6f6f6 3px, #bbb 3px, #bbb 4px, #fff 4px, #fff 5px, #bbb 5px, #bbb 6px, #f6f6f6 6px); }
.col .i:nth-child(odd) { height: 17px; }
.col .sep { width: 14px; height: 1px; margin: 2px 0 1px; background: #b3b3b3; }
.stack { display: flex; flex-direction: column; gap: 2px; }

/* drawing window */
.mdi { flex: 1; min-width: 0; display: flex; padding: 3px 1px 0 2px; background: #a7a7a7; }
.win {
  flex: 1;
  min-width: 0;
  display: flex;
  flex-direction: column;
  padding: 0 7px 6px 7px;
  border: 1px solid #32454f;
  border-left-width: 2px;
  border-radius: 5px 5px 0 0;
  background: linear-gradient(90deg, #c4d8ee 0, #b9cfe9 60%, #9bd2ee 100%);
}
.title {
  display: flex;
  align-items: center;
  height: 23px;
  margin: 0 -7px;
  padding: 5px 7px 0;
  border-radius: 4px 4px 0 0;
  background: linear-gradient(#d4e2f1 0, #9dbadb 4px, #bcd2ea 100%);
}
.dwg { width: 12px; height: 12px; }
.title h1 { flex: 1; margin: 0; text-align: center; font: 12px/16px "Open Sans", sans-serif; color: #1c1c1c; }
.wbtns { display: flex; gap: 2px; }
.wb { width: 24px; height: 13px; display: flex; align-items: center; justify-content: center; border: 1px solid #63788f; border-radius: 2px; background: linear-gradient(#dce7f3 50%, #adc3dc 50%); }
.wb svg { width: 10px; height: 8px; }
.wb.close { border-color: #612c2a; background: linear-gradient(#e2998b 50%, #c84832 50%); }
.canvas { position: relative; flex: 1; min-height: 0; overflow: hidden; background: #000; box-shadow: 2px 0 #e6eef5; }
.drawing { position: absolute; inset: 0; width: 100%; height: 100%; }
.ucs { position: absolute; left: 0; bottom: 3px; width: 60px; height: 60px; overflow: visible; }
.ucs text { fill: #bbb; font: 11px "Liberation Sans", sans-serif; }
.dyn {
  position: absolute;
  left: 527px;
  top: 232px;
  width: 45px;
  height: 16px;
  padding: 0 2px;
  border: 1px solid #fff;
  background: linear-gradient(90deg, #3b8ff0 35px, #fff 35px) 2px 1px / 40px 12px no-repeat #fff;
  color: #fff;
  font: 9px/14px "Open Sans", sans-serif;
}
.tip {
  position: absolute;
  left: 617px;
  top: 249px;
  display: flex;
  align-items: center;
  justify-content: space-between;
  width: 71px;
  height: 16px;
  padding: 0 2px;
  border: 1px solid #a6a6c4;
  background: #16165c;
  color: #e0e0ee;
  font: 9px/14px "Noto Sans CJK SC", sans-serif;
}
.tip svg { width: 8px; height: 8px; }
.tabs { display: flex; align-items: stretch; height: 12px; background: #f0f0f0; box-shadow: 2px 0 #e6eef5; }
.nb { width: 14px; border-right: 1px solid #c4c4c4; display: flex; align-items: center; justify-content: center; background: #fafafa; }
.nb svg { width: 8px; height: 8px; }
.tab { padding: 0; background: #fff; color: #222; font: 10px/12px "Noto Sans CJK SC", sans-serif; }
.tab.on { margin-left: 1px; padding: 0 1px 0 5px; background: #000; color: #fff; clip-path: polygon(0 0, 100% 0, 100% 100%, 5px 100%); }
.slash { width: 5px; height: 12px; background: #fff; }

/* command line */
.cmd { padding: 6px 0 0; background: linear-gradient(#f0f0f0 5px, #8f8f8f 5px, #8f8f8f 7px, #f0f0f0 7px); }
.cmdline {
  display: flex;
  align-items: center;
  justify-content: space-between;
  height: 13px;
  margin: 7px 0 0 9px;
  padding-left: 2px;
  border-top: 1px solid #777;
  border-left: 1px solid #777;
  background: #fff;
}
.cmdline p { margin: 0; font: 12px/12px "Noto Sans CJK SC", sans-serif; white-space: pre; }
.cmdline span { font: 10px/12px "Liberation Mono", monospace; }
.up { width: 17px; height: 12px; background: #f0f0f0; display: flex; align-items: center; justify-content: center; }
.up svg { width: 8px; height: 6px; }

/* overlay badge */
.brand {
  position: absolute;
  right: 55px;
  bottom: 12px;
  display: flex;
  align-items: center;
  gap: 11px;
  width: 180px;
  height: 85px;
  padding-left: 15px;
  background: #223058;
  color: #c9ced9;
}
.brand svg { width: 36px; height: 38px; }
.brand div { display: flex; flex-direction: column; }
.brand strong { font: 700 26px/28px "Noto Sans CJK SC", sans-serif; }
.brand span { font: 12px/14px "DejaVu Sans", sans-serif; }
```
